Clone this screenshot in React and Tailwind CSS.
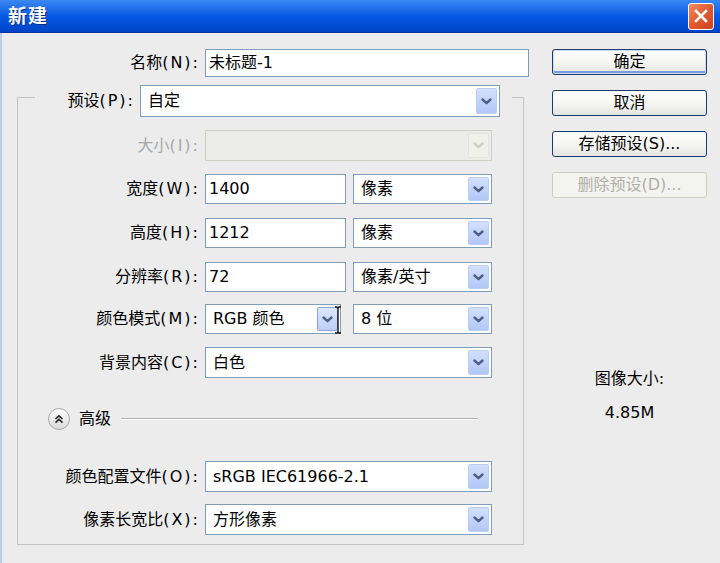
import React from 'react';

function Chevron({ disabled }) {
  return (
    <svg width="11" height="7" viewBox="0 0 11 7">
      <path d="M1.5 1.5 L5.5 5.2 L9.5 1.5" fill="none" stroke={disabled ? '#cfcfc8' : '#4d6185'} strokeWidth="2.4" strokeLinecap="round" strokeLinejoin="round" />
    </svg>
  );
}

function DropBtn({ disabled, hover }) {
  let cls = 'bg-gradient-to-b from-[#d3e0fd] to-[#b2c7f6] border-[#bccdf3]';
  if (disabled) cls = 'bg-[#f1f1ec] border-[#e4e4de]';
  if (hover) cls = 'bg-gradient-to-b from-[#dce7fe] to-[#bccff8] border-[#8da6d6]';
  return (
    <div className={`w-[21px] h-full shrink-0 rounded-[2px] border flex items-center justify-center ${cls}`}>
      <Chevron disabled={disabled} />
    </div>
  );
}

function Select({ value, w, h = 'h-[31px]', disabled, hover, children }) {
  return (
    <div className={`relative ${w} ${h} border flex items-center p-[2px] ${disabled ? 'border-[#cfcfc6] bg-[#ececea]' : 'border-[#7f9db9] bg-white'}`}>
      <span className="flex-1 pl-[5px] whitespace-nowrap overflow-hidden">{value}</span>
      <DropBtn disabled={disabled} hover={hover} />
      {children}
    </div>
  );
}

function Input({ value, w, h = 'h-[30px]' }) {
  return (
    <div className={`${w} ${h} border border-[#7f9db9] bg-white flex items-center pl-[3px] whitespace-nowrap`}>
      {value}
    </div>
  );
}

function Label({ cn, k, w = 'w-[182px]', disabled }) {
  return (
    <div className={`${w} shrink-0 text-right whitespace-nowrap ${disabled ? 'text-[#a8a8a8]' : 'text-black'}`}>
      {cn}
      <span className="tracking-[2px]">({k}):</span>
    </div>
  );
}

function Button({ children, primary, disabled }) {
  let cls = 'border-[#1f3b6c] text-black bg-gradient-to-b from-white via-[#f6f6f4] to-[#e4e4e0]';
  if (primary) cls += ' shadow-[inset_0_0_0_1px_#cfdcf6,inset_0_-2px_0_1px_#7b9ce0]';
  if (disabled) cls = 'border-[#cdcdc4] text-[#b0b0a8] bg-[#f3f3ef]';
  return (
    <div className={`w-full h-[26px] rounded-[3px] border flex items-center justify-center whitespace-nowrap ${cls}`}>
      {children}
    </div>
  );
}

export default function App() {
  return (
    <div className="w-[720px] h-[563px] overflow-hidden bg-[#ececec] text-[16px] leading-[20px] text-black [font-family:'DejaVu_Sans','Noto_Sans_CJK_SC',sans-serif]">
      {/* title bar */}
      <div className="h-[33px] flex items-center justify-between pl-[8px] pr-[6px] bg-gradient-to-b from-[#3b87f3] via-[#0659e4] to-[#0043c6] border-b border-[#0032a0]">
        <span className="text-white font-bold text-[19px] tracking-[1px] [text-shadow:1px_1px_0_#0a2a80]">新建</span>
        <div className="w-[26px] h-[27px] rounded-[3px] border border-white bg-gradient-to-br from-[#f08a62] via-[#e25a2f] to-[#c9431c] flex items-center justify-center">
          <svg width="14" height="14" viewBox="0 0 14 14">
            <path d="M2 2 L12 12 M12 2 L2 12" stroke="white" strokeWidth="2.6" strokeLinecap="square" />
          </svg>
        </div>
      </div>

      <div className="h-[530px] flex border-l-2 border-[#b9cdee] pt-[16px]">
        {/* left column */}
        <div className="w-[527px] flex flex-col">
          <div className="flex items-center h-[28px]">
            <Label cn="名称" k="N" w="w-[198px]" />
            <div className="ml-[5px]">
              <Input value="未标题-1" w="w-[324px]" h="h-[28px]" />
            </div>
          </div>

          <fieldset className="ml-[15px] w-[507px] border border-[#c4c4c4] pb-[9px]">
            <legend className="ml-[17px]">
              <div className="flex items-center pt-[8px] pr-[12px]">
                <Label cn="预设" k="P" w="w-[100px]" />
                <div className="ml-[5px]">
                  <Select value="自定" w="w-[360px]" h="h-[32px]" />
                </div>
              </div>
            </legend>

            <div className="flex items-center mt-[13px]">
              <Label cn="大小" k="I" disabled />
              <div className="ml-[5px]">
                <Select value="" w="w-[287px]" disabled />
              </div>
            </div>

            <div className="flex items-center mt-[13px]">
              <Label cn="宽度" k="W" />
              <div className="ml-[5px] flex gap-[7px]">
                <Input value="1400" w="w-[141px]" />
                <Select value="像素" w="w-[139px]" h="h-[30px]" />
              </div>
            </div>

            <div className="flex items-center mt-[14px]">
              <Label cn="高度" k="H" />
              <div className="ml-[5px] flex gap-[7px]">
                <Input value="1212" w="w-[141px]" />
                <Select value="像素" w="w-[139px]" h="h-[30px]" />
              </div>
            </div>

            <div className="flex items-center mt-[14px]">
              <Label cn="分辨率" k="R" />
              <div className="ml-[5px] flex gap-[7px]">
                <Input value="72" w="w-[141px]" />
                <Select value="像素/英寸" w="w-[139px]" h="h-[30px]" />
              </div>
            </div>

            <div className="flex items-center mt-[12px]">
              <Label cn="颜色模式" k="M" />
              <div className="ml-[5px] flex gap-[12px]">
                <Select value="RGB 颜色" w="w-[136px]" h="h-[30px]" hover>
                  <svg className="absolute left-[128px] top-[1px]" width="8" height="28" viewBox="0 0 8 28">
                    <path d="M1 1 H3 Q4 1 4 3 V25 Q4 27 3 27 H1 M7 1 H5 Q4 1 4 3 M4 25 Q4 27 5 27 H7" fill="none" stroke="#111" strokeWidth="1.4" />
                  </svg>
                </Select>
                <Select value="8 位" w="w-[139px]" h="h-[30px]" />
              </div>
            </div>

            <div className="flex items-center mt-[13px]">
              <Label cn="背景内容" k="C" />
              <div className="ml-[5px]">
                <Select value="白色" w="w-[287px]" />
              </div>
            </div>

            <div className="flex items-center h-[22px] mt-[30px] mr-[45px]">
              <div className="ml-[30px] w-[22px] h-[22px] rounded-full border border-[#a9a9a9] bg-gradient-to-b from-white to-[#dadada] flex items-center justify-center">
                <svg width="10" height="10" viewBox="0 0 10 10">
                  <path d="M1.5 5 L5 1.8 L8.5 5 M1.5 8.6 L5 5.4 L8.5 8.6" fill="none" stroke="#222" strokeWidth="1.6" />
                </svg>
              </div>
              <span className="ml-[9px]">高级</span>
              <div className="ml-[10px] flex-1 h-[2px] border-t border-[#b3b3b3] border-b border-b-white" />
            </div>

            <div className="flex items-center mt-[31px]">
              <Label cn="颜色配置文件" k="O" />
              <div className="ml-[5px]">
                <Select value="sRGB IEC61966-2.1" w="w-[287px]" />
              </div>
            </div>

            <div className="flex items-center mt-[12px]">
              <Label cn="像素长宽比" k="X" />
              <div className="ml-[5px]">
                <Select value="方形像素" w="w-[287px]" />
              </div>
            </div>
          </fieldset>
        </div>

        {/* right column */}
        <div className="ml-[23px] w-[155px] flex flex-col items-center">
          <div className="w-full flex flex-col gap-[15px]">
            <Button primary>确定</Button>
            <Button>取消</Button>
            <Button>存储预设(S)...</Button>
            <Button disabled>删除预设(D)...</Button>
          </div>
          <div className="mt-[171px]">图像大小:</div>
          <div className="mt-[14px]">4.85M</div>
        </div>
      </div>
    </div>
  );
}
